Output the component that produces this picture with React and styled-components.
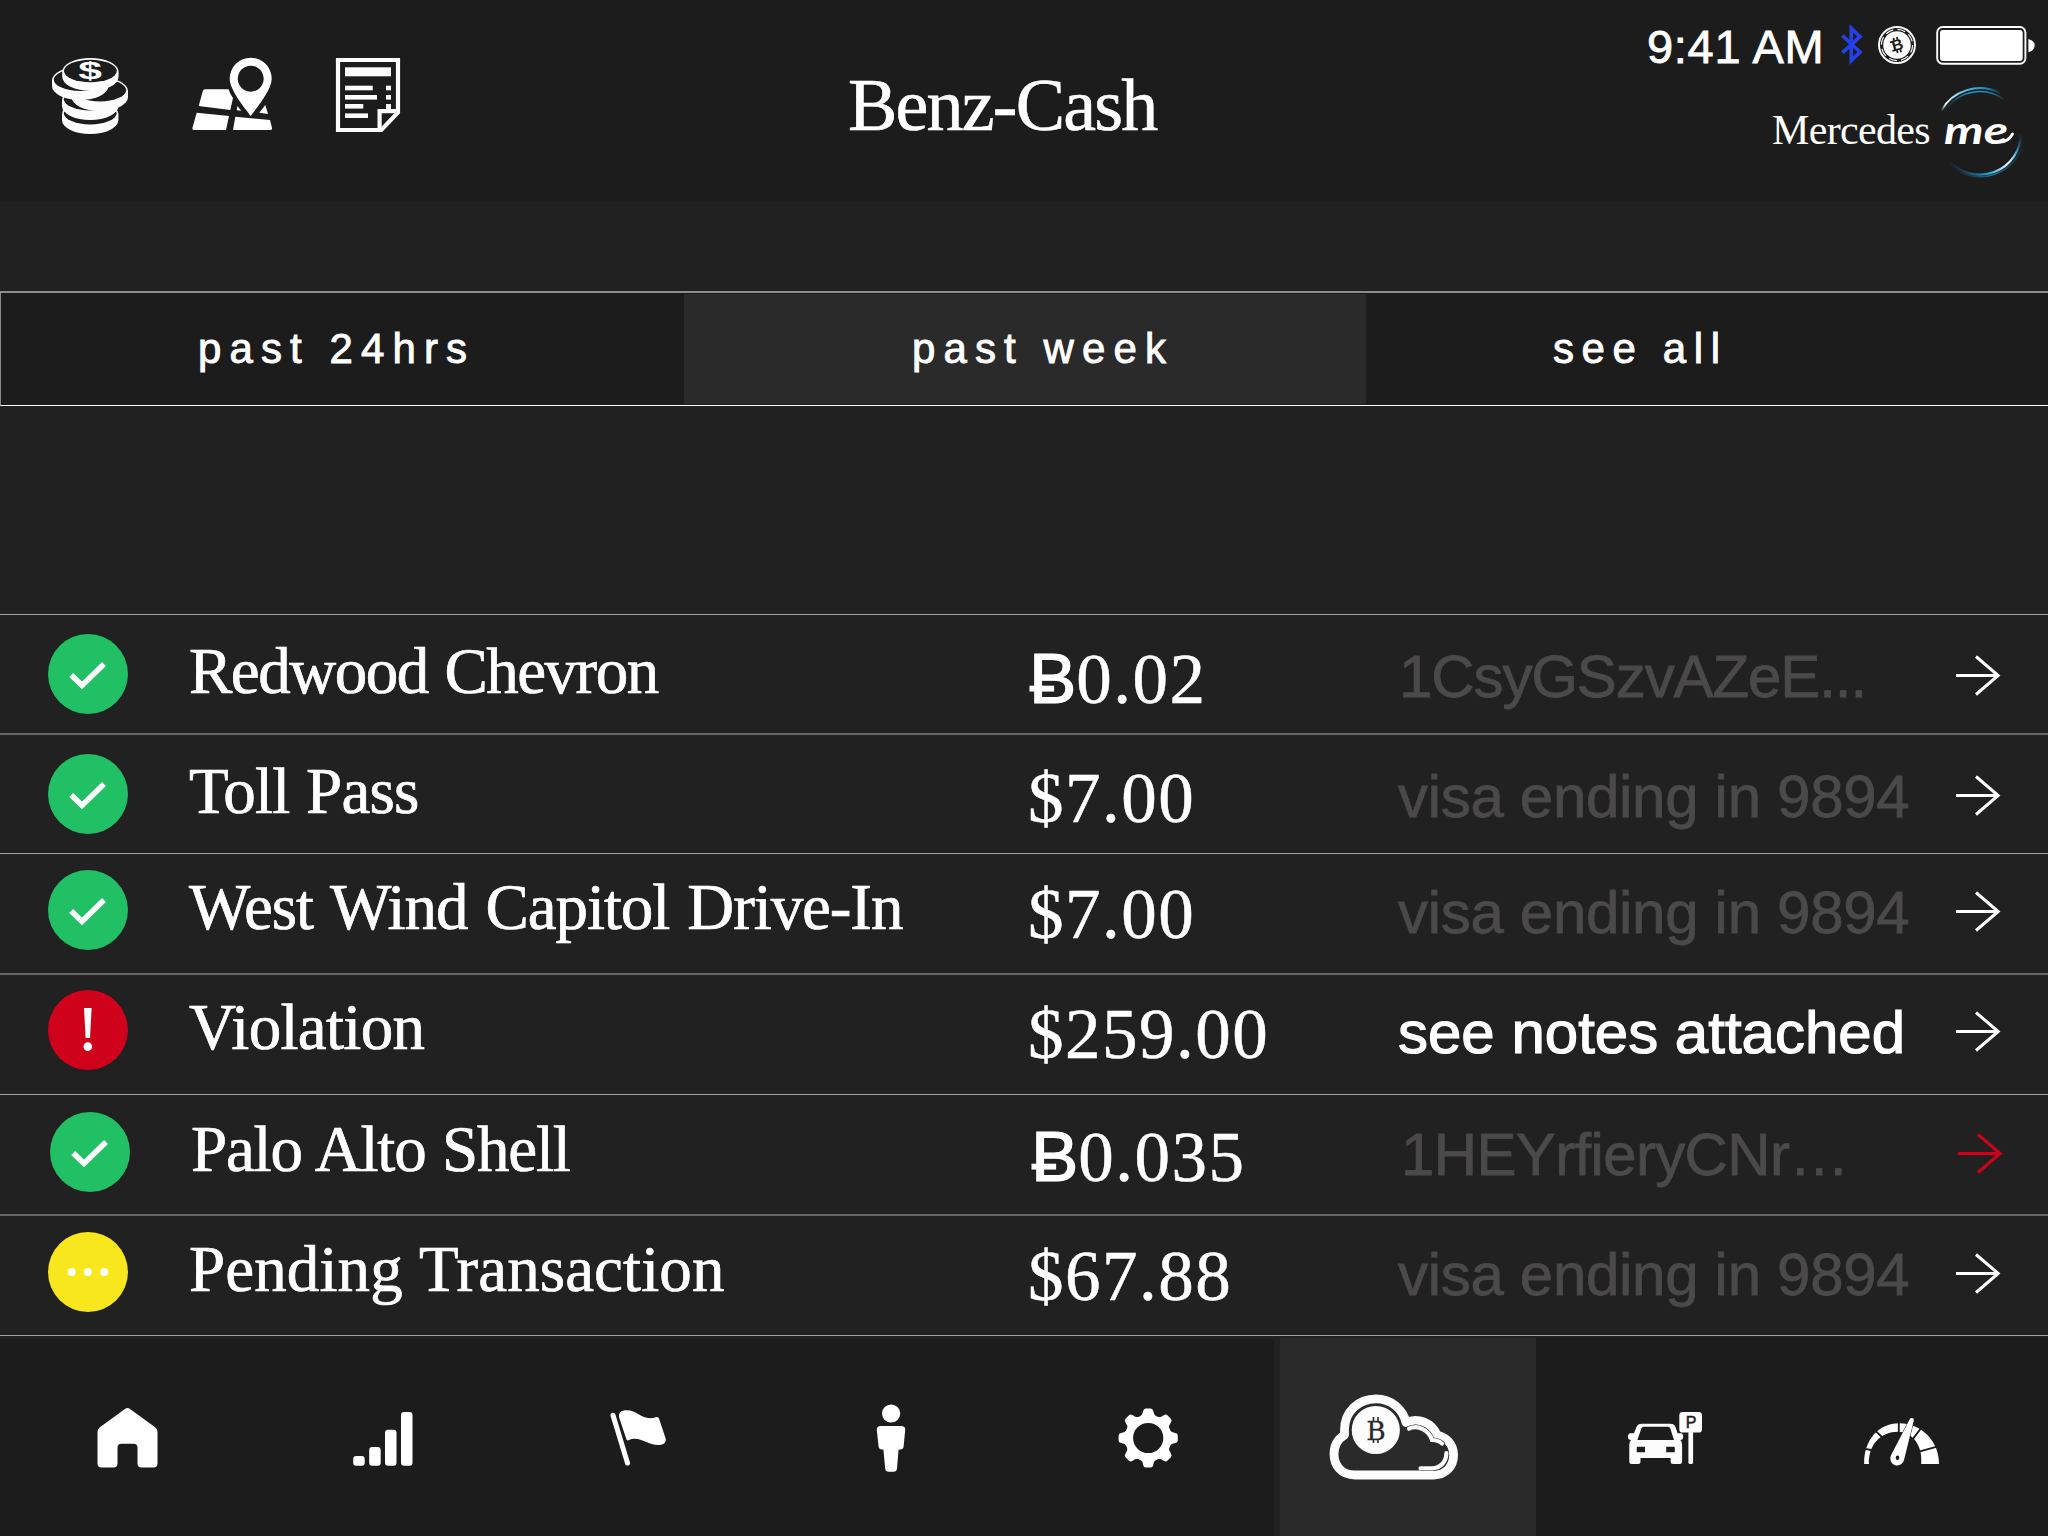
import React from "react";
import styled, { createGlobalStyle } from "styled-components";

const sans = `"Liberation Sans", Arial, Helvetica, sans-serif`;
const serif = `"Liberation Serif", "Times New Roman", serif`;
const c = {
  page: "#212121",
  panel: "#1c1c1c",
  active: "#2a2a2a",
  white: "#ffffff",
  muted: "#4b4949",
  green: "#22c064",
  red: "#d0021b",
  yellow: "#f8e71c",
};

const GlobalStyle = createGlobalStyle`
  * { box-sizing: border-box; }
  html, body { margin: 0; padding: 0; background: ${c.page}; }
  svg { display: block; flex: none; overflow: visible; }
`;

const Screen = styled.div`
  width: 2048px;
  height: 1536px;
  display: flex;
  flex-direction: column;
  overflow: hidden;
  background: ${c.page};
  color: ${c.white};
  font-family: ${sans};
`;

/* ---------- header ---------- */
const Header = styled.header`
  height: 202px;
  background: ${c.panel};
  display: grid;
  grid-template-columns: 796px 1fr auto;
  padding: 0 13px 0 52px;
`;
const Shortcuts = styled.div`
  display: flex;
  align-items: flex-start;
  gap: 62px;
  padding-top: 58px;
`;
const Title = styled.h1`
  margin: 0;
  padding-top: 65px;
  font: 400 74px/80px ${serif};
  letter-spacing: -1.8px;
  -webkit-text-stroke: 0.6px currentColor;
`;
const HeaderRight = styled.div`
  display: flex;
  flex-direction: column;
  align-items: flex-end;
  padding-top: 24px;
`;
const StatusBar = styled.div`
  display: flex;
  align-items: center;
  height: 42px;
`;
const Clock = styled.span`
  width: 193px;
  padding-top: 3px;
  font-size: 47px;
  line-height: 42px;
  letter-spacing: 0.7px;
  white-space: nowrap;
  -webkit-text-stroke: 0.8px currentColor;
`;
const Glyph = styled.svg`
  margin-right: ${(p) => p.$after || 0}px;
`;
const Brand = styled.div`
  display: flex;
  margin: 19px 7px 0 0;
`;
const BrandName = styled.span`
  width: 160px;
  font: 400 42px/90px ${serif};
  letter-spacing: -0.65px;
  white-space: nowrap;
`;

/* ---------- period tabs ---------- */
const Tabs = styled.div`
  margin-top: 89px;
  height: 115px;
  display: grid;
  grid-template-columns: 683px 682px 1fr;
  background: ${c.panel};
  border: solid #8c8c8c;
  border-width: 2px 0 1px 1px;
  border-bottom-color: ${c.white};
`;
const Tab = styled.div`
  display: flex;
  align-items: center;
  margin: 1px 0;
  padding-left: ${(p) => p.$inset}px;
  background: ${(p) => (p.$active ? c.active : "transparent")};
  font-size: 42px;
  line-height: 1;
  letter-spacing: ${(p) => p.$tracking}px;
  white-space: nowrap;
  -webkit-text-stroke: 0.9px currentColor;
`;

/* ---------- transactions ---------- */
const List = styled.div`
  margin-top: 208px;
  border-bottom: 1px solid #a0a0a0;
`;
const Row = styled.div`
  height: ${(p) => p.$height}px;
  display: grid;
  grid-template-columns: 140px 840px 370px 557px auto;
  justify-content: start;
  align-items: start;
  border-top: ${(p) => (p.$thick ? "2px solid #666666" : "1px solid #a0a0a0")};
  padding: ${(p) => p.$top}px 0 0 ${(p) => p.$left}px;
  white-space: nowrap;
`;
const Badge = styled.div`
  width: 80px;
  height: 80px;
  border-radius: 50%;
  background: ${(p) => p.$color};
`;
const Name = styled.div`
  padding-left: 1px;
  font: 400 65px/74px ${serif};
  letter-spacing: ${(p) => p.$tracking}px;
  word-spacing: ${(p) => p.$gap || 0}px;
  -webkit-text-stroke: 0.7px currentColor;
`;
const Amount = styled.div`
  padding: ${(p) => (p.$coin ? "1px 0 0 1px" : "0")};
  font: 400 71px/88px ${serif};
  letter-spacing: 1.5px;
  -webkit-text-stroke: 0.5px currentColor;
`;
const CoinSign = styled.span`
  font-family: ${sans};
  letter-spacing: 0;
  -webkit-text-stroke: 1.2px currentColor;
`;
const Memo = styled.div`
  padding-left: ${(p) => (p.$hash ? 1 : 0)}px;
  font-size: 60px;
  line-height: 86px;
  letter-spacing: ${(p) => p.$tracking}px;
  color: ${(p) => (p.$strong ? c.white : c.muted)};
  -webkit-text-stroke: ${(p) => (p.$strong ? 1.2 : 0.8)}px currentColor;
`;

/* ---------- bottom navigation ---------- */
const Nav = styled.nav`
  flex: 1;
  display: grid;
  grid-template-columns: repeat(8, 256px);
  background: ${c.page};
`;
const NavItem = styled.div`
  display: flex;
  justify-content: center;
  margin: ${(p) => (p.$low ? 3 : 2)}px ${(p) => (p.$gap ? 6 : 0)}px 0 0;
  padding: ${(p) => (p.$low ? 51 : 52)}px 0 0 ${(p) => (p.$gap ? 6 : 0)}px;
  background: ${(p) => (p.$active ? c.active : c.panel)};
`;

/* ---------- icons ---------- */
function Disc({ cx, cy, h }) {
  return (
    <>
      <path
        d={`M${cx - 28.2} ${cy} A28.2 13.8 0 0 1 ${cx + 28.2} ${cy} v${h} A28.2 14 0 0 1 ${cx - 28.2} ${cy + h}Z`}
        fill="#fcfcfc"
      />
      <ellipse cx={cx} cy={cy - 0.8} rx="26.4" ry="11.2" fill={c.panel} />
    </>
  );
}

const CoinsIcon = () => (
  <svg width="76" height="76" viewBox="0 0 76 76">
    <Disc cx={38.2} cy={56} h={6} />
    <Disc cx={38.2} cy={42} h={6} />
    <Disc cx={47.8} cy={33} h={6} />
    <Disc cx={28.2} cy={22.5} h={5.5} />
    <Disc cx={38.4} cy={13.8} h={5} />
    <text
      transform="translate(38 20.6) scale(1.85 1)"
      textAnchor="middle"
      fontFamily={sans}
      fontWeight="700"
      fontSize="23"
      fill="#fcfcfc"
    >
      $
    </text>
  </svg>
);

const MapIcon = () => (
  <svg width="84" height="76" viewBox="0 2 84 76">
    <g fill="#fff">
      <path d="M15 33.3H38.5Q40 38 43 42L40.3 54 8.7 50 12.8 35Q13.3 33.3 15 33.3Z" />
      <path d="M6.7 56.7 39 60 36 74H4Q2 74 2.4 72Z" />
      <path d="M45.3 60.7 80 64 82 72Q82.2 74 80.5 74H43Z" />
      <path d="M47.3 50 51.3 54.7 46.7 54.3Z M75.3 49 78 58 69.3 56.7Z" />
      <path
        fillRule="evenodd"
        d="M60.7 60C55 52 39.7 34 39.7 22.7A21 21 0 1 1 81.7 22.7C81.7 34 66.4 52 60.7 60ZM60.7 9.7a13 13 0 1 0 0.01 0Z"
      />
    </g>
  </svg>
);

const NoteIcon = () => (
  <svg width="64" height="74" viewBox="0 0 64 74">
    <g fill="none" stroke="#fcfcfc" strokeWidth="4.2">
      <path d="M2 2H62V54.5L45.3 72H2Z" />
      <path d="M62 53.2H43.6V72" />
    </g>
    <g fill="#fcfcfc">
      <rect x="9" y="9.3" width="46" height="9" />
      <rect x="9" y="27.7" width="27.7" height="4.6" />
      <rect x="9" y="37" width="32" height="4.6" />
      <rect x="9" y="46" width="18.3" height="4.6" />
      <rect x="9" y="55.4" width="23" height="4.6" />
      <rect x="50" y="27.7" width="5" height="4.6" />
      <rect x="50" y="37" width="5" height="4.6" />
      <rect x="50" y="46" width="5" height="5" />
    </g>
  </svg>
);

const BluetoothIcon = () => (
  <Glyph $after={13} width="24" height="42" viewBox="0 0 24 42">
    <path d="M2.3 11.5 20 28 11.3 36.6V4.2L20 12.6 2.3 28.8" fill="none" stroke="#2540e8" strokeWidth="3.6" />
  </Glyph>
);

const BitcoinIcon = () => (
  <Glyph $after={18} width="40" height="42" viewBox="0 0 40 42">
    <circle cx="20" cy="21" r="18" fill="none" stroke="#fcfcfc" strokeWidth="1.9" />
    <circle cx="20" cy="21" r="15.6" fill="none" stroke="#fcfcfc" strokeWidth="1.2" strokeDasharray="8 4.25" />
    <circle cx="20" cy="21" r="13.8" fill="#fcfcfc" />
    <g transform="rotate(-16 20 21)">
      <text x="20.4" y="26.4" textAnchor="middle" fontFamily={sans} fontWeight="700" fontSize="15.5" fill={c.panel}>
        B
      </text>
      <path d="M18.5 13.2v3M22 13.2v3M18.5 26v3M22 26v3M14 16.6h3M14 25.4h3" stroke={c.panel} strokeWidth="1.8" />
    </g>
  </Glyph>
);

const BatteryIcon = () => (
  <svg width="100" height="42" viewBox="0 0 100 42">
    <rect x="2.2" y="3" width="88.2" height="36.8" rx="5.5" fill="none" stroke="#fff" strokeWidth="1.9" />
    <rect x="5" y="6" width="82.7" height="31" rx="3" fill="#fff" />
    <path d="M93.4 15Q99.7 16.5 99.7 21.6T93.4 28.2Z" fill="#fff" />
  </svg>
);

const MeLogo = () => (
  <svg width="96" height="96" viewBox="0 0 96 96">
    <defs>
      <linearGradient id="arcTop" gradientUnits="userSpaceOnUse" x1="9" y1="26" x2="70" y2="8">
        <stop offset="0" stopColor="#fff" stopOpacity="0" />
        <stop offset="0.1" stopColor="#f2fbff" />
        <stop offset="0.45" stopColor="#5cc3ee" />
        <stop offset="0.8" stopColor="#1784b8" />
        <stop offset="1" stopColor="#1784b8" stopOpacity="0" />
      </linearGradient>
      <linearGradient id="arcTopInner" gradientUnits="userSpaceOnUse" x1="12" y1="28" x2="72" y2="12">
        <stop offset="0" stopColor="#1a6f99" stopOpacity="0" />
        <stop offset="0.5" stopColor="#1b9ad6" />
        <stop offset="0.85" stopColor="#1a7fb0" />
        <stop offset="1" stopColor="#1a7fb0" stopOpacity="0" />
      </linearGradient>
      <linearGradient id="arcLow" gradientUnits="userSpaceOnUse" x1="90" y1="48" x2="18" y2="82">
        <stop offset="0" stopColor="#1a6f99" stopOpacity="0" />
        <stop offset="0.2" stopColor="#5cc3ee" />
        <stop offset="0.32" stopColor="#f2fbff" />
        <stop offset="0.6" stopColor="#1ba5e2" />
        <stop offset="1" stopColor="#1784b8" stopOpacity="0" />
      </linearGradient>
      <linearGradient id="arcLowOuter" gradientUnits="userSpaceOnUse" x1="92" y1="56" x2="18" y2="82">
        <stop offset="0" stopColor="#1a6f99" stopOpacity="0" />
        <stop offset="0.5" stopColor="#1d6f96" />
        <stop offset="1" stopColor="#1a6f99" stopOpacity="0" />
      </linearGradient>
    </defs>
    <g fill="none">
      <path d="M9 26A44.6 44.6 0 0 1 68 8" stroke="url(#arcTop)" strokeWidth="2" />
      <path d="M11.5 29A41 41 0 0 1 71.5 14" stroke="url(#arcTopInner)" strokeWidth="1.6" />
      <path d="M89 49A41.3 41.3 0 0 1 18 77" stroke="url(#arcLow)" strokeWidth="2.2" />
      <path d="M92 56A44.8 44.8 0 0 1 18 80" stroke="url(#arcLowOuter)" strokeWidth="1.5" />
    </g>
    <text
      x="12"
      y="58.5"
      textLength="64"
      lengthAdjust="spacingAndGlyphs"
      fontFamily={`Lato, ${sans}`}
      fontStyle="italic"
      fontWeight="700"
      fontSize="38"
      fill="#fff"
    >
      me
    </text>
    <path d="M68 57.2Q76 57 80.5 49" fill="none" stroke="#fff" strokeWidth="2.8" strokeLinecap="round" />
  </svg>
);

const badges = {
  ok: (
    <path d="M24.2 41 35 51.4 57 30" transform="translate(-1 0)" fill="none" stroke="#fff" strokeWidth="5.6" />
  ),
  alert: (
    <g fill="#fff">
      <path d="M36 18H43.6L42 48H37.6Z" />
      <circle cx="39.8" cy="56.6" r="4.3" />
    </g>
  ),
  pending: (
    <g fill="#fff">
      <circle cx="23.7" cy="40" r="4" />
      <circle cx="39.8" cy="40" r="4" />
      <circle cx="56.2" cy="40" r="4" />
    </g>
  ),
};
const badgeColor = { ok: c.green, alert: c.red, pending: c.yellow };

const Arrow = ({ color }) => (
  <svg width="46" height="83" viewBox="0 0 46 83">
    <path d="M1 41.5H43M21 22.5 43.2 41.5 21 60.5" fill="none" stroke={color} strokeWidth="3" />
  </svg>
);

const NavIcon = ({ children }) => (
  <svg width="160" height="100" viewBox="-10 0 160 100" fill="#fff">
    {children}
  </svg>
);

const HomeIcon = () => (
  <NavIcon>
    <path d="M67 19Q69.5 17 72 19L97.5 37.5Q99.5 39 99.5 42V73.5Q99.5 77.5 95.5 77.5H83.5Q79.5 77.5 79.5 73.5V57.5Q79.5 53.7 75.5 53.7H63.5Q59.5 53.7 59.5 57.5V73.5Q59.5 77.5 55.5 77.5H43.5Q39.5 77.5 39.5 73.5V42Q39.5 39 41.5 37.5Z" />
  </NavIcon>
);
const SignalIcon = () => (
  <NavIcon>
    {[[39.2, 66], [55.2, 57], [71, 39.7], [87, 22]].map(([x, y]) => (
      <rect key={x} x={x} y={y} width="11.5" height={75.7 - y} rx="3" />
    ))}
  </NavIcon>
);
const FlagIcon = () => (
  <NavIcon>
    <path d="M43 25.2 57.5 73" stroke="#fff" strokeWidth="5" strokeLinecap="round" />
    <path d="M49 27Q48 21 55 20.3C68 19 72 32 86.5 27Q88.5 26.5 89 28.5L95.8 49Q96.5 54 90 55C77 56 70 45 58.5 50.3Q56.8 51 56.3 49Z" />
  </NavIcon>
);
const PersonIcon = () => (
  <NavIcon>
    <circle cx="65.1" cy="23.5" r="9.1" />
    <path d="M55 36H75Q79.5 36 79.2 40L77.6 56.5Q77.3 59.5 74.5 59.5H72.6L71 78.5Q70.7 81.7 67.5 81.7H62.7Q59.5 81.7 59.2 78.5L57.4 59.5H55.8Q53 59.5 52.6 56.5L50.8 40Q50.5 36 55 36Z" />
  </NavIcon>
);
const GearIcon = () => (
  <NavIcon>
    <g transform="translate(66.2 48)">
      <circle r="19.2" fill="none" stroke="#fff" strokeWidth="8.2" />
      {[0, 45, 90, 135, 180, 225, 270, 315].map((a) => (
        <path
          key={a}
          transform={`rotate(${a})`}
          d="M-8 -21.5Q-5.6 -23 -5 -27Q-4.6 -29.6 -2.5 -29.6H2.5Q4.6 -29.6 5 -27Q5.6 -23 8 -21.5Z"
        />
      ))}
    </g>
  </NavIcon>
);
const CloudIcon = () => (
  <NavIcon>
    <path
      d="M17 85C3 85-4 75-4 64C-4 56 0 49 6.5 45V40C6.5 22 20 8.9 38 8.9C53 8.9 65 19 68 32.5C80 27 94 33 99 45C108 47 115.6 54 115.6 65C115.6 77 107 85 96 85Z"
      fill="none"
      stroke="#fcfcfc"
      strokeWidth="8.8"
      strokeLinejoin="round"
    />
    <path d="M71 38.7C80 34.5 91 40 94 50Q100 50 104 53.5" fill="none" stroke={c.active} strokeWidth="5.2" strokeLinecap="round" />
    <path d="M71 38.7C80 34.5 91 40 94 50Q100 50 104 53.5" fill="none" stroke="#fcfcfc" strokeWidth="4.2" strokeLinecap="round" />
    <path d="M108.4 63C108.4 72 102 78.3 94 78.3H82.5" fill="none" stroke={c.active} strokeWidth="5.2" />
    <path d="M108.4 63C108.4 72 102 78.3 94 78.3H82.5" fill="none" stroke="#fcfcfc" strokeWidth="4.2" strokeLinecap="round" />
    <circle cx="37.8" cy="40" r="24.1" fill="#fcfcfc" />
    <text x="38" y="49.8" textAnchor="middle" fontFamily={`"DejaVu Serif", serif`} fontSize="26.5" fill={c.active} stroke={c.active} strokeWidth="0.3">
      B
    </text>
    <path d="M35.5 27v4M40 27v4M35.5 49v4M40 49v4" stroke={c.active} strokeWidth="1.6" />
  </NavIcon>
);
const ParkingIcon = () => (
  <NavIcon>
    <g fill="#fcfcfc">
      <path
        fillRule="evenodd"
        d="M47.5 33.7H76.5Q80 33.7 81.5 37L83.6 43.3H87Q89.2 43.6 89.2 46.7T86.4 50Q88.1 51.5 88.1 55V71.5Q88.1 74 85.6 74H79Q76.6 74 76.6 71.5V68H46.5V71.5Q46.5 74 44 74H37.8Q35.3 74 35.3 71.5V55Q35.3 51.5 37 50Q34 50 34 46.7T36.3 43.3H40L42.5 37Q44 33.7 47.5 33.7ZM49.5 36.7Q48 36.7 47.4 38.3L43.4 50H80L76.2 38.3Q75.6 36.7 74 36.7ZM43.7 56.7Q42.7 56.7 42.7 57.7V62.3H51V56.7ZM72.2 56.7V62.3H80.8V57.7Q80.8 56.7 79.8 56.7Z"
      />
      <rect x="85.3" y="22" width="22.7" height="20.6" rx="3.4" />
      <rect x="94.4" y="41" width="4.7" height="33" rx="1.4" />
    </g>
    <text x="97" y="38" textAnchor="middle" fontFamily={sans} fontSize="16" fill={c.panel} stroke={c.panel} strokeWidth="0.5">
      P
    </text>
  </NavIcon>
);
const GaugeIcon = () => (
  <NavIcon>
    <path d="M14.2 74C13.5 50 29 33.3 49 33.3C72 33.3 89.5 52 89 74H71.2C73 54 61 41.8 48 41.8C31 42 18.5 54 18.9 74Z" />
    <path
      d="M13 58.6 23 60.2M26 41.4 33 48M48.8 31V44M72 37 62.5 49.3M88 56.4 69 61.6"
      stroke={c.panel}
      strokeWidth="1.9"
      fill="none"
    />
    <path
      d="M59.6 29.4Q60 28 62 28T63.9 30L54.2 69.3A7 7 0 1 1 41 65.3Z"
      stroke={c.panel}
      strokeWidth="1"
      paintOrder="stroke"
    />
    <ellipse cx="47.5" cy="67.8" rx="1.8" ry="2.3" fill={c.panel} />
  </NavIcon>
);

/* ---------- data ---------- */
const transactions = [
  { status: "ok", name: "Redwood Chevron", track: -1.5, gap: 2, coin: true, amount: "0.02", memo: "1CsyGSzvAZeE...", memoTrack: -1.1, hash: true, h: 119, top: 19 },
  { status: "ok", name: "Toll Pass", track: -0.8, gap: 1, amount: "$7.00", memo: "visa ending in 9894", memoTrack: -0.3, h: 120, top: 19, thick: true },
  { status: "ok", name: "West Wind Capitol Drive-In", track: -1.1, gap: 3, amount: "$7.00", memo: "visa ending in 9894", memoTrack: -0.3, h: 120, top: 16 },
  { status: "alert", name: "Violation", track: -0.7, amount: "$259.00", memo: "see notes attached", memoTrack: 0, strong: true, h: 121, top: 15, thick: true },
  { status: "ok", name: "Palo Alto Shell", track: -1.2, gap: 1.5, coin: true, amount: "0.035", memo: "1HEYrfieryCNr…", memoTrack: -0.65, hash: true, h: 120, top: 17, left: 50, arrow: c.red },
  { status: "pending", name: "Pending Transaction", track: 0.1, gap: 1, amount: "$67.88", memo: "visa ending in 9894", memoTrack: -0.3, h: 121, top: 16, thick: true },
];

const navItems = [
  { id: "home", Icon: HomeIcon, low: true },
  { id: "signal", Icon: SignalIcon, low: true },
  { id: "flag", Icon: FlagIcon, low: true },
  { id: "person", Icon: PersonIcon, low: true },
  { id: "settings", Icon: GearIcon, low: true, gap: true },
  { id: "cloud", Icon: CloudIcon, active: true },
  { id: "parking", Icon: ParkingIcon },
  { id: "gauge", Icon: GaugeIcon },
];

export default function App() {
  return (
    <Screen>
      <GlobalStyle />
      <Header>
        <Shortcuts>
          <CoinsIcon />
          <MapIcon />
          <NoteIcon />
        </Shortcuts>
        <Title>Benz-Cash</Title>
        <HeaderRight>
          <StatusBar>
            <Clock>9:41 AM</Clock>
            <BluetoothIcon />
            <BitcoinIcon />
            <BatteryIcon />
          </StatusBar>
          <Brand>
            <BrandName>Mercedes</BrandName>
            <MeLogo />
          </Brand>
        </HeaderRight>
      </Header>

      <Tabs>
        <Tab $inset={197} $tracking={8.1}>past 24hrs</Tab>
        <Tab $inset={228} $tracking={8.1} $active>past week</Tab>
        <Tab $inset={187} $tracking={7.6}>see all</Tab>
      </Tabs>

      <List>
        {transactions.map((t) => (
          <Row key={t.name} $height={t.h} $top={t.top} $left={t.left || 48} $thick={t.thick}>
            <Badge $color={badgeColor[t.status]}>
              <svg width="80" height="80" viewBox="0 0 80 80">{badges[t.status]}</svg>
            </Badge>
            <Name $tracking={t.track} $gap={t.gap}>{t.name}</Name>
            <Amount $coin={t.coin}>
              {t.coin && <CoinSign>Ƀ</CoinSign>}
              {t.amount}
            </Amount>
            <Memo $tracking={t.memoTrack} $strong={t.strong} $hash={t.hash}>{t.memo}</Memo>
            <Arrow color={t.arrow || c.white} />
          </Row>
        ))}
      </List>

      <Nav>
        {navItems.map(({ id, Icon, low, gap, active }) => (
          <NavItem key={id} $low={low} $gap={gap} $active={active}>
            <Icon />
          </NavItem>
        ))}
      </Nav>
    </Screen>
  );
}
